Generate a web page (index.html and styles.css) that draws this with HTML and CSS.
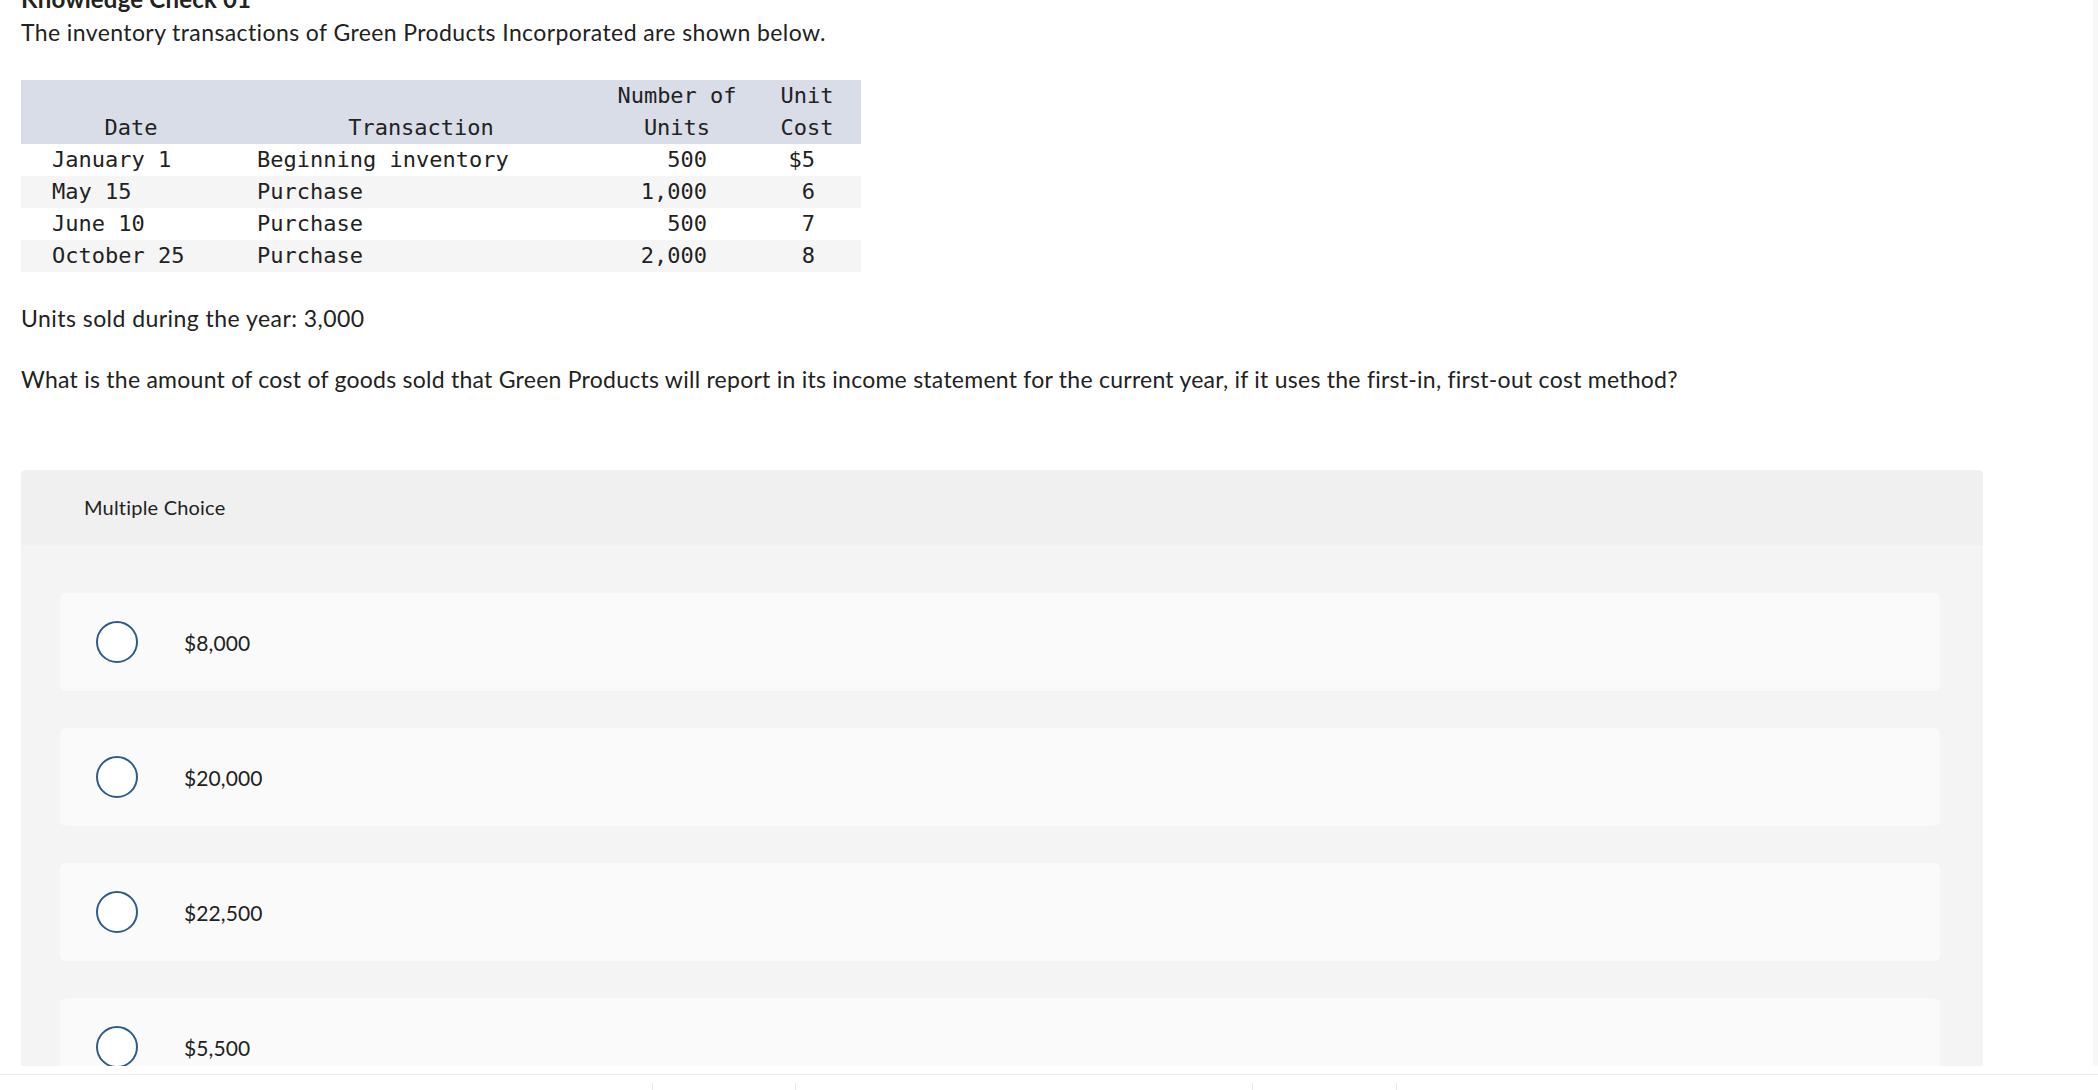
FILE: index.html
```html
<!DOCTYPE html>
<html lang="en">
<head>
<meta charset="utf-8">
<title>Knowledge Check 01</title>
<link rel="stylesheet" href="styles.css">
</head>
<body>
<div class="page">
  <main class="scroll">
    <h2 class="title">Knowledge Check 01</h2>
    <p class="intro">The inventory transactions of Green Products Incorporated are shown below.</p>
    <table class="inv">
      <colgroup>
        <col class="c-date"><col class="c-trans"><col class="c-units"><col class="c-cost">
      </colgroup>
      <thead>
        <tr>
          <th>Date</th>
          <th>Transaction</th>
          <th>Number of<br>Units</th>
          <th>Unit<br>Cost</th>
        </tr>
      </thead>
      <tbody>
        <tr><td class="d">January 1</td><td class="t">Beginning inventory</td><td class="n">500</td><td class="n">$5</td></tr>
        <tr><td class="d">May 15</td><td class="t">Purchase</td><td class="n">1,000</td><td class="n">6</td></tr>
        <tr><td class="d">June 10</td><td class="t">Purchase</td><td class="n">500</td><td class="n">7</td></tr>
        <tr><td class="d">October 25</td><td class="t">Purchase</td><td class="n">2,000</td><td class="n">8</td></tr>
      </tbody>
    </table>
    <p class="units">Units sold during the year: 3,000</p>
    <p class="question">What is the amount of cost of goods sold that Green Products will report in its income statement for the current year, if it uses the first-in, first-out cost method?</p>
    <section class="mc">
      <div class="mc-head">Multiple Choice</div>
      <div class="mc-body">
        <label class="opt"><span class="radio"></span><span class="opt-text">$8,000</span></label>
        <label class="opt"><span class="radio"></span><span class="opt-text">$20,000</span></label>
        <label class="opt"><span class="radio"></span><span class="opt-text">$22,500</span></label>
        <label class="opt"><span class="radio"></span><span class="opt-text">$5,500</span></label>
      </div>
    </section>
  </main>
  <footer class="foot">
    <div class="foot-row">
      <span class="foot-cell"></span>
      <span class="foot-cell"></span>
      <span class="foot-cell"></span>
      <span class="foot-cell"></span>
      <span class="foot-cell"></span>
    </div>
  </footer>
</div>
</body>
</html>
```

FILE: styles.css
```css
* { box-sizing: border-box; }

html, body {
  margin: 0;
  padding: 0;
  background: #ffffff;
}

body {
  font-family: Lato, "Open Sans", sans-serif;
  color: #222222;
}

.page {
  width: 2098px;
  height: 1090px;
  overflow: hidden;
  display: flex;
  flex-direction: column;
}

.scroll {
  height: 1066px;
  flex: none;
  overflow: hidden;
  padding: 0 110px 0 21px;
  border-right: 5px solid #f7f7f7;
}

.title {
  margin: -16px 0 0;
  font-size: 24px;
  line-height: 30px;
  font-weight: 700;
  letter-spacing: 0.2px;
}

.intro {
  margin: 3px 0 33px;
  font-size: 23px;
  line-height: 30px;
  letter-spacing: 0.4px;
}

.inv {
  border-collapse: collapse;
  table-layout: fixed;
  width: 840px;
  font-family: "DejaVu Sans Mono", monospace;
  font-size: 22px;
  color: #222222;
}

.c-date { width: 220px; }
.c-trans { width: 360px; }
.c-units { width: 152px; }
.c-cost { width: 108px; }

.inv thead tr {
  background: #d9dde8;
}

.inv th {
  font-weight: 400;
  text-align: center;
  vertical-align: bottom;
  line-height: 32px;
  padding: 0;
  white-space: nowrap;
}

.inv td {
  height: 32px;
  line-height: 32px;
  padding: 0;
  white-space: nowrap;
}

.inv tbody tr:nth-child(even) {
  background: #f5f5f5;
}

.inv td.d { padding-left: 31px; }
.inv td.t { padding-left: 16px; }
.inv td.n { text-align: right; padding-right: 46px; }

.units {
  margin: 31px 0 0;
  font-size: 23px;
  line-height: 30px;
  letter-spacing: 0.45px;
}

.question {
  margin: 31px 0 0;
  font-size: 23px;
  line-height: 30px;
  letter-spacing: 0.25px;
}

.mc {
  margin-top: 76px;
  border-radius: 5px 5px 0 0;
  background: #f4f4f4;
  overflow: hidden;
}

.mc-head {
  height: 75px;
  line-height: 75px;
  padding-left: 63px;
  background: #f0f0f0;
  font-size: 20px;
  letter-spacing: 0.2px;
}

.mc-body {
  padding: 48px 43px 40px 39px;
  display: flex;
  flex-direction: column;
  gap: 37px;
}

.opt {
  height: 98px;
  border-radius: 6px;
  background: #fafafa;
  display: flex;
  align-items: center;
  padding-left: 36px;
}

.radio {
  width: 42px;
  height: 42px;
  border-radius: 50%;
  border: 2px solid #2d5b8c;
  background: #ffffff;
  flex: none;
  margin-right: 46px;
}

.opt-text {
  font-size: 21px;
  color: #222222;
  letter-spacing: 0.1px;
}

.foot {
  flex: 1;
  padding-top: 8px;
}

.foot-row {
  border-top: 1px solid #ececec;
  display: grid;
  grid-template-columns: 652px 143px 457px 144px 1fr;
}

.foot-cell {
  height: 7px;
  margin-top: 8px;
}

.foot-cell + .foot-cell {
  border-left: 1px solid #e8e8e8;
}
```
